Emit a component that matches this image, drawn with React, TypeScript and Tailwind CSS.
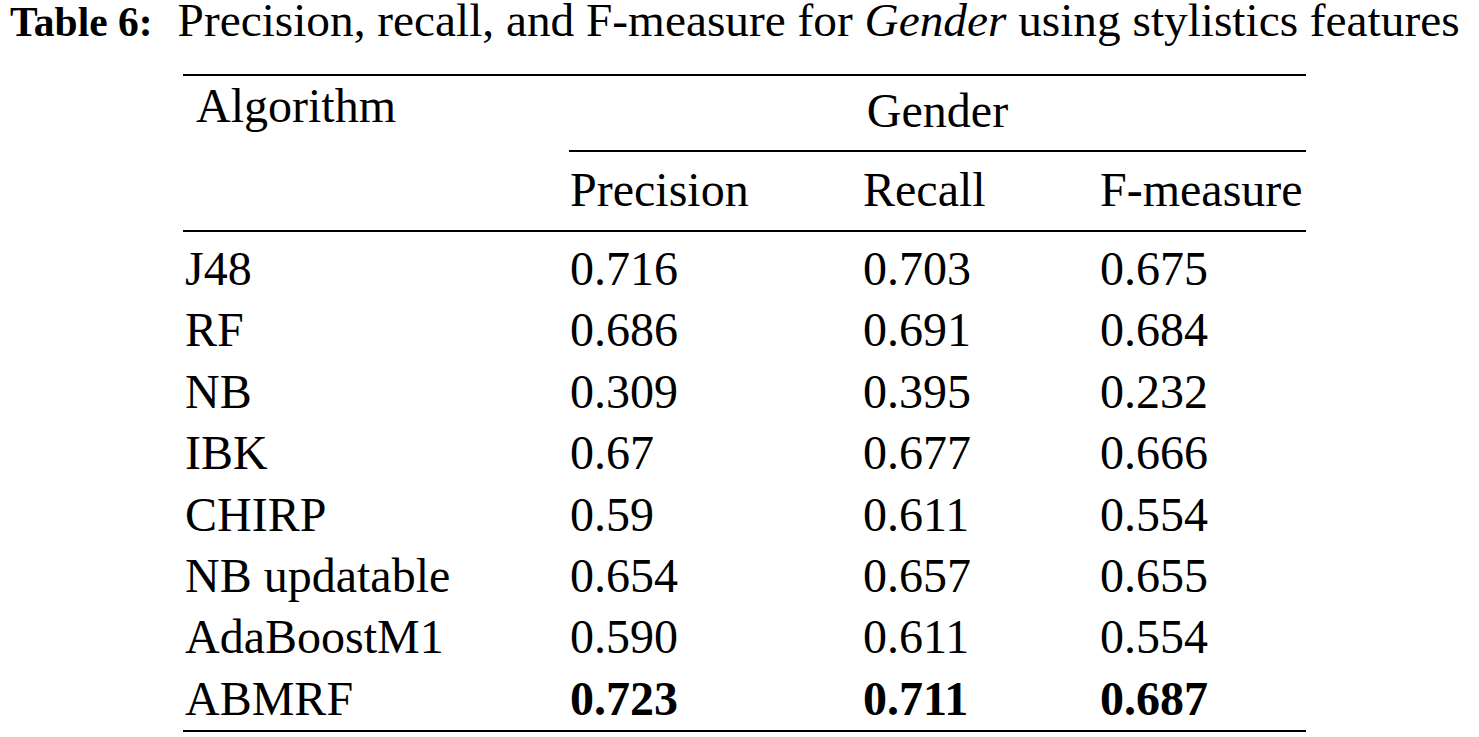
const rows = [
  { name: "J48", p: "0.716", r: "0.703", f: "0.675" },
  { name: "RF", p: "0.686", r: "0.691", f: "0.684" },
  { name: "NB", p: "0.309", r: "0.395", f: "0.232" },
  { name: "IBK", p: "0.67", r: "0.677", f: "0.666" },
  { name: "CHIRP", p: "0.59", r: "0.611", f: "0.554" },
  { name: "NB updatable", p: "0.654", r: "0.657", f: "0.655" },
  { name: "AdaBoostM1", p: "0.590", r: "0.611", f: "0.554" },
  { name: "ABMRF", p: "0.723", r: "0.711", f: "0.687", best: true },
];

export default function App() {
  return (
    <div
      className="w-[1479px] h-[737px] bg-white text-black overflow-hidden"
      style={{ fontFamily: '"Liberation Serif", "Times New Roman", serif' }}
    >
      <div className="pl-[10px] text-[47.3px] leading-[41px] whitespace-nowrap">
        <span className="font-bold text-[41.5px] mr-[25px]">Table 6:</span>
        Precision, recall, and F-measure for <i>Gender</i> using stylistics features
      </div>

      <div className="ml-[183px] mt-[31px] w-[1123px] text-[48px] leading-[48px]">
        <div className="flex border-t-2 border-b-2 border-black">
          <div className="w-[386px] pl-[13px] pt-[6px]">Algorithm</div>
          <div className="flex-1 flex flex-col">
            <div className="h-[76px] border-b-2 border-black text-center pt-[11px]">Gender</div>
            <div className="h-[78px] flex pt-[14px]">
              <div className="w-[294px] pl-[1px]">Precision</div>
              <div className="w-[237px]">Recall</div>
              <div className="flex-1">F-measure</div>
            </div>
          </div>
        </div>

        <div className="pt-[6px] pb-[1px] border-b-2 border-black">
          {rows.map((row) => (
            <div key={row.name} className="flex leading-[61.4px] h-[61.4px]">
              <div className="w-[386px] pl-[2px]">{row.name}</div>
              <div className={`w-[294px] pl-[1px] ${row.best ? "font-bold" : ""}`}>{row.p}</div>
              <div className={`w-[237px] ${row.best ? "font-bold" : ""}`}>{row.r}</div>
              <div className={`flex-1 ${row.best ? "font-bold" : ""}`}>{row.f}</div>
            </div>
          ))}
        </div>
      </div>
    </div>
  );
}
